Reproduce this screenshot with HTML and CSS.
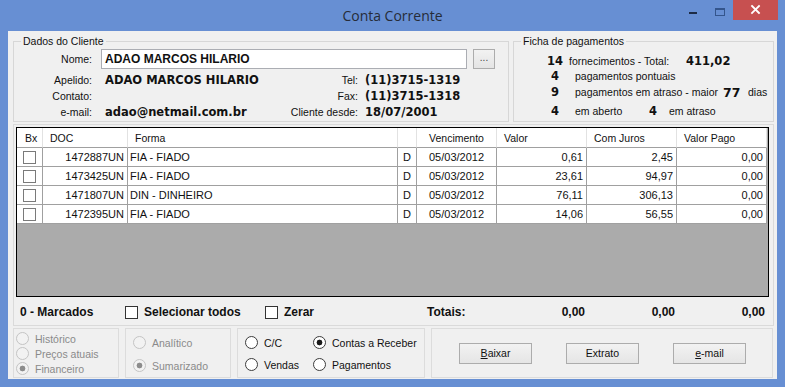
FILE: index.html
```html
<!DOCTYPE html>
<html lang="pt">
<head>
<meta charset="utf-8">
<title>Conta Corrente</title>
<link rel="stylesheet" href="styles.css">
</head>
<body>
<div class="window">
  <div class="titlebar">
    <div></div>
    <div class="title">Conta Corrente</div>
    <div class="controls">
      <span class="ctl ctl-min"><svg width="26" height="20" viewBox="0 0 26 20"><rect x="9" y="12" width="8" height="2" fill="#1d2b45"/></svg></span>
      <span class="ctl ctl-max"><svg width="27" height="20" viewBox="0 0 27 20"><rect x="9.5" y="8.5" width="9" height="7" fill="none" stroke="#34558c" stroke-width="1"/><line x1="9" y1="9.5" x2="19" y2="9.5" stroke="#34558c" stroke-width="1"/></svg></span>
      <span class="ctl ctl-close"><svg width="45" height="20" viewBox="0 0 45 20"><path d="M19 6 L26 13 M26 6 L19 13" stroke="#fff" stroke-width="1.8" stroke-linecap="square"/></svg></span>
    </div>
  </div>
  <div class="client">
    <div class="top">
      <fieldset class="grp dados">
        <legend>Dados do Cliente</legend>
        <div class="nome-row">
          <span class="lbl">Nome:</span>
          <div class="input">ADAO MARCOS HILARIO</div>
          <div class="btn-dots">...</div>
        </div>
        <div class="info">
          <span class="lbl">Apelido:</span><span class="val">ADAO MARCOS HILARIO</span><span class="lbl2">Tel:</span><span class="val2">(11)3715-1319</span>
          <span class="lbl">Contato:</span><span class="val"></span><span class="lbl2">Fax:</span><span class="val2">(11)3715-1318</span>
          <span class="lbl">e-mail:</span><span class="val">adao@netmail.com.br</span><span class="lbl2">Cliente desde:</span><span class="val2">18/07/2001</span>
        </div>
      </fieldset>
      <fieldset class="grp ficha">
        <legend>Ficha de pagamentos</legend>
        <div class="frow r1"><span class="num">14</span><span class="ftxt w117">fornecimentos - Total:</span><span class="num-b">411,02</span></div>
        <div class="frow r2"><span class="num">4</span><span class="ftxt">pagamentos pontuais</span></div>
        <div class="frow r3"><span class="num">9</span><span class="ftxt w148">pagamentos em atraso - maior</span><span class="num-big">77</span><span class="ftxt-plain">dias</span></div>
        <div class="frow r4"><span class="num">4</span><span class="ftxt w74">em aberto</span><span class="num-l">4</span><span class="ftxt-plain">em atraso</span></div>
      </fieldset>
    </div>

    <div class="panel">
      <div class="grid">
        <div class="row head">
          <div class="c">Bx</div>
          <div class="c">DOC</div>
          <div class="c">Forma</div>
          <div class="c"></div>
          <div class="c center">Vencimento</div>
          <div class="c">Valor</div>
          <div class="c">Com Juros</div>
          <div class="c">Valor Pago</div>
        </div>
        <div class="row">
          <div class="c center"><span class="cb"></span></div>
          <div class="c right">1472887UN</div>
          <div class="c">FIA - FIADO</div>
          <div class="c center">D</div>
          <div class="c center">05/03/2012</div>
          <div class="c right">0,61</div>
          <div class="c right">2,45</div>
          <div class="c right">0,00</div>
        </div>
        <div class="row">
          <div class="c center"><span class="cb"></span></div>
          <div class="c right">1473425UN</div>
          <div class="c">FIA - FIADO</div>
          <div class="c center">D</div>
          <div class="c center">05/03/2012</div>
          <div class="c right">23,61</div>
          <div class="c right">94,97</div>
          <div class="c right">0,00</div>
        </div>
        <div class="row">
          <div class="c center"><span class="cb"></span></div>
          <div class="c right">1471807UN</div>
          <div class="c">DIN - DINHEIRO</div>
          <div class="c center">D</div>
          <div class="c center">05/03/2012</div>
          <div class="c right">76,11</div>
          <div class="c right">306,13</div>
          <div class="c right">0,00</div>
        </div>
        <div class="row">
          <div class="c center"><span class="cb"></span></div>
          <div class="c right">1472395UN</div>
          <div class="c">FIA - FIADO</div>
          <div class="c center">D</div>
          <div class="c center">05/03/2012</div>
          <div class="c right">14,06</div>
          <div class="c right">56,55</div>
          <div class="c right">0,00</div>
        </div>
      </div>
      <div class="bar">
        <span class="marc">0 - Marcados</span>
        <span class="chkgrp w140"><span class="chk"></span><span class="chklbl">Selecionar todos</span></span>
        <span class="chkgrp w162"><span class="chk"></span><span class="chklbl">Zerar</span></span>
        <span class="totais">Totais:</span>
        <span class="tot">0,00</span>
        <span class="tot">0,00</span>
        <span class="tot">0,00</span>
      </div>
    </div>

    <div class="bottom">
      <div class="box b1">
        <div class="opt dis"><span class="radio"></span><span>Histórico</span></div>
        <div class="opt dis"><span class="radio"></span><span>Preços atuais</span></div>
        <div class="opt dis"><span class="radio on"></span><span>Financeiro</span></div>
      </div>
      <div class="box b2">
        <div class="opt dis"><span class="radio"></span><span>Analítico</span></div>
        <div class="opt dis"><span class="radio on"></span><span>Sumarizado</span></div>
      </div>
      <div class="box b3">
        <div class="opt"><span class="radio"></span><span>C/C</span></div>
        <div class="opt"><span class="radio on"></span><span>Contas a Receber</span></div>
        <div class="opt"><span class="radio"></span><span>Vendas</span></div>
        <div class="opt"><span class="radio"></span><span>Pagamentos</span></div>
      </div>
      <div class="box b4">
        <button class="btn"><u>B</u>aixar</button>
        <button class="btn">Extrato</button>
        <button class="btn"><u>e</u>-mail</button>
      </div>
    </div>
  </div>
</div>
</body>
</html>
```

FILE: styles.css
```css
* { box-sizing: border-box; }
body {
  margin: 0;
  font-family: "Liberation Sans", Arial, sans-serif;
  font-size: 10.5px;
  color: #111;
}
.window {
  width: 785px;
  height: 387px;
  background: #678fd3;
  display: flex;
  flex-direction: column;
}
.titlebar {
  height: 31px;
  flex: none;
  display: grid;
  grid-template-columns: 1fr auto 1fr;
}
.title {
  font-family: "Open Sans", "Noto Sans", sans-serif;
  font-size: 14px;
  line-height: 31px;
  color: #262c38;
}
.controls {
  justify-self: end;
  align-self: start;
  display: flex;
  margin-right: 7px;
}
.ctl { display: block; height: 20px; }
.ctl svg { display: block; }
.ctl-close { background: #c75050; }

.client {
  flex: 1;
  margin: 0 8px 8px;
  background: #f0f0f0;
}

/* top groups */
.top {
  display: flex;
  gap: 4px;
  padding: 4px 0 0 5px;
}
.grp {
  margin: 0;
  padding: 0;
  min-width: 0;
  border: 1px solid #d7d7d7;
}
.grp legend {
  padding: 0 2px;
  margin-left: 7px;
  line-height: 12px;
  font-size: 10.5px;
  color: #111;
}
.dados { width: 496px; }
.ficha { width: 261px; }

.nome-row {
  display: flex;
  align-items: center;
  height: 20px;
  margin-top: 2px;
}
.lbl {
  width: 87px;
  padding-right: 9px;
  text-align: right;
  white-space: nowrap;
}
.input {
  width: 366px;
  height: 20px;
  border: 1px solid #abadb3;
  background: #fff;
  padding-left: 3px;
  font-weight: bold;
  font-size: 12px;
  line-height: 18px;
}
.btn-dots {
  width: 22px;
  height: 20px;
  margin-left: 6px;
  border: 1px solid #acacac;
  background: linear-gradient(#f2f2f2, #e4e4e4);
  text-align: center;
  line-height: 16px;
  font-size: 10px;
  color: #444;
}
.info {
  display: grid;
  grid-template-columns: 87px 169px 95px 1fr;
  grid-auto-rows: 16px;
  align-items: center;
  margin-top: 3px;
  padding-bottom: 1px;
}
.info .val, .info .val2 {
  font-family: "DejaVu Sans", sans-serif;
  font-weight: bold;
  font-size: 11.5px;
  white-space: nowrap;
}
.info .val { padding-left: 4px; }
.info .lbl2 {
  text-align: right;
  padding-right: 7px;
  white-space: nowrap;
}

/* ficha */
.frow {
  display: flex;
  align-items: center;
  white-space: nowrap;
}
.r1 { margin-top: 6px; height: 16px; }
.r2 { height: 13px; }
.r3 { margin-top: 2px; height: 16px; }
.r4 { margin-top: 3px; height: 16px; margin-bottom: 2px; }
.num {
  width: 20px;
  margin-left: 31px;
  text-align: center;
  font-family: "DejaVu Sans", sans-serif;
  font-weight: bold;
  font-size: 11.5px;
}
.ftxt { margin-left: 10px; flex: none; }
.r1 .ftxt { margin-left: 4px; }
.w117 { width: 117px; }
.w148 { width: 148px; }
.w74 { width: 74px; }
.num-b {
  font-family: "DejaVu Sans", sans-serif;
  font-weight: bold;
  font-size: 11.5px;
}
.num-big {
  width: 25px;
  flex: none;
  font-family: "DejaVu Sans", sans-serif;
  font-weight: bold;
  font-size: 12.5px;
}
.num-l {
  width: 20px;
  flex: none;
  font-family: "DejaVu Sans", sans-serif;
  font-weight: bold;
  font-size: 11.5px;
}

/* grid panel */
.panel {
  margin: 2px 0 0 5px;
  width: 761px;
  border: 1px solid #dadada;
  padding: 2px 0 0 2px;
}
.grid {
  width: 753px;
  height: 170px;
  border: 1px solid #000;
  background: #ababab;
}
.row {
  display: grid;
  grid-template-columns: 26px 85px 270px 19px 80px 90px 90px 90px;
  width: 750px;
  height: 19px;
  background: #fff;
  font-size: 11px;
}
.row.head {
  height: 20px;
  font-size: 10.5px;
}
.c {
  display: flex;
  align-items: center;
  padding: 0 3px 0 2px;
  border-right: 1px solid #a0a0a0;
  border-bottom: 1px solid #a0a0a0;
  white-space: nowrap;
  overflow: hidden;
}
.head .c {
  padding-left: 7px;
  border-right-color: #e2e2e2;
  border-bottom-color: #a0a0a0;
}
.head .c:first-child { padding-left: 8px; }
.c.center, .head .c.center { justify-content: center; padding: 0; }
.c.right { justify-content: flex-end; padding-right: 3px; }
.cb {
  width: 13px;
  height: 13px;
  border: 1px solid #7a7a7a;
  background: #fff;
}

.bar {
  height: 28px;
  padding: 2px 0 0 4px;
  display: flex;
  align-items: center;
  font-weight: bold;
  font-size: 12px;
  white-space: nowrap;
}
.marc { width: 105px; }
.chkgrp { display: flex; align-items: center; }
.w140 { width: 140px; }
.w162 { width: 162px; }
.chk {
  width: 13px;
  height: 13px;
  border: 1px solid #333;
  background: #fff;
}
.chklbl { margin-left: 6px; }
.totais { width: 70px; }
.tot { width: 90px; text-align: right; padding-right: 2px; }

/* bottom option groups */
.bottom {
  display: flex;
  gap: 6px;
  margin: 2px 0 0 5px;
}
.box {
  height: 50px;
  border: 1px solid #dcdcdc;
}
.b1 { width: 106px; padding: 2px 0 0 2px; }
.b2 { width: 106px; padding: 6px 0 0 7px; display: flex; flex-direction: column; gap: 8px; }
.b3 {
  width: 188px;
  padding: 6px 0 0 7px;
  display: grid;
  grid-template-columns: 68px auto;
  grid-auto-rows: 15px;
  row-gap: 7px;
  align-content: start;
}
.b4 {
  width: 342px;
  display: flex;
  align-items: center;
  gap: 34px;
  padding-left: 27px;
}
.opt {
  display: flex;
  align-items: center;
  height: 15px;
  white-space: nowrap;
  font-size: 10.5px;
}
.opt.dis { color: #8a8a8a; }
.radio {
  width: 13px;
  height: 13px;
  border-radius: 50%;
  border: 1px solid #3c3c3c;
  background: #fff;
  margin-right: 6px;
  flex: none;
}
.radio.on { background: radial-gradient(circle, #1a1a1a 0 2.6px, #fff 3.2px); }
.dis .radio { border-color: #c4c4c4; background: #f2f2f2; }
.dis .radio.on { background: radial-gradient(circle, #8c8c8c 0 2.6px, #f2f2f2 3.2px); }

.btn {
  width: 73px;
  height: 21px;
  border: 1px solid #acacac;
  background: linear-gradient(#f2f2f2, #e5e5e5);
  font-family: "Liberation Sans", Arial, sans-serif;
  font-size: 10.5px;
  color: #111;
  padding: 0;
}
```
